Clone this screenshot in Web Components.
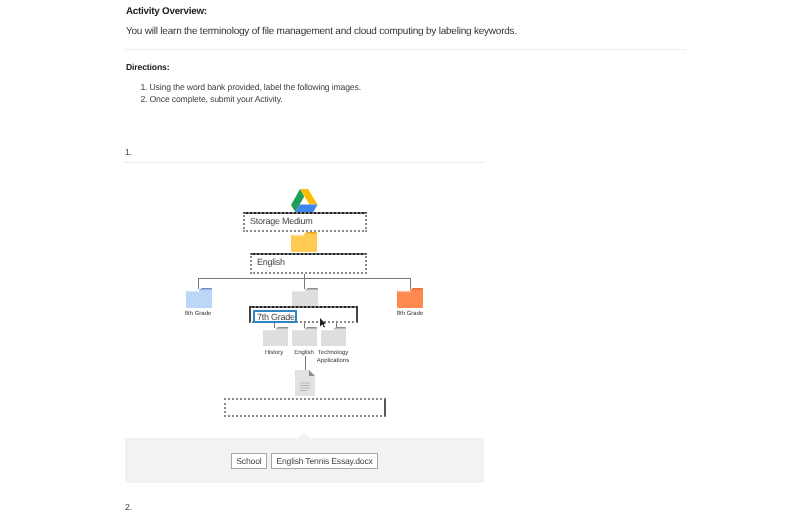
<!DOCTYPE html>
<html>
<head>
	<meta charset="utf-8">
	<title>Activity</title>
	<style>
		html, body { margin: 0; background: #fff; }
		body { height: 513px; overflow: hidden; font-family: "Liberation Sans", Arial, sans-serif; color: #333; text-rendering: geometricPrecision; }
	</style>
</head>
<body>
	<activity-page>
		<activity-overview heading="Activity Overview:">You will learn the terminology of file management and cloud computing by labeling keywords.</activity-overview>
		<activity-directions heading="Directions:">
			<li>Using the word bank provided, label the following images.</li>
			<li>Once complete, submit your Activity.</li>
		</activity-directions>
		<question-block number="1.">
			<label-diagram></label-diagram>
			<word-bank>
				<word-chip>School</word-chip>
				<word-chip>English Tennis Essay.docx</word-chip>
			</word-bank>
		</question-block>
		<question-block number="2."></question-block>
	</activity-page>

	<script>
	// small helper, every element is the same shape: a shadow root with styles + markup
	function component(name, html, setup) {
		customElements.define(name, class extends HTMLElement {
			connectedCallback() {
				if (this.shadowRoot) return;
				this.attachShadow({mode: 'open'});
				this.shadowRoot.innerHTML = html;
				if (setup) setup(this, this.shadowRoot);
			}
		});
	}

	component('activity-page', `
		<style>
			/* the reference is a slightly soft, scaled-down capture */
			:host { display: block; width: 561px; margin-left: 125px; filter: blur(.3px); }
		</style>
		<slot></slot>
	`);

	component('activity-overview', `
		<style>
			:host { display: block; padding: 5px 0 0 1px; height: 44px; border-bottom: 1px dotted #dcdcdc; }
			h2 { margin: 0; font-size: 9.800px; letter-spacing: -.23px; line-height: 13px; font-weight: bold; color: #222; }
			p { margin: 7px 0 0; font-size: 10px; letter-spacing: -.22px; line-height: 14px; color: #333; }
		</style>
		<h2></h2>
		<p><slot></slot></p>
	`, (el, root) => { root.querySelector('h2').textContent = el.getAttribute('heading'); });

	component('activity-directions', `
		<style>
			:host { display: block; padding: 11px 0 0 1px; height: 85px; }
			h3 { margin: 0; font-size: 8.700px; letter-spacing: -.18px; line-height: 12px; font-weight: bold; color: #222; }
			ol { margin: 9px 0 0; padding: 0 0 0 23.500px; font-size: 8.700px; letter-spacing: -.18px; line-height: 11.500px; color: #444; }
		</style>
		<h3></h3>
		<ol><slot></slot></ol>
	`, (el, root) => { root.querySelector('h3').textContent = el.getAttribute('heading'); });

	component('question-block', `
		<style>
			:host { display: block; width: 359px; }
			.num { font-size: 8.700px; line-height: 12px; color: #444; height: 16px; box-sizing: border-box; }
			hr { margin: 0; border: 0; border-top: 1px dotted #d8d8d8; }
			:host([number="2."]) { margin-top: 18px; }
			:host([number="2."]) hr { display: none; }
		</style>
		<div class="num"></div>
		<hr>
		<slot></slot>
	`, (el, root) => { root.querySelector('.num').textContent = el.getAttribute('number'); });

	component('drive-logo', `
		<style>:host { display: block; line-height: 0; }</style>
		<svg width="27" height="24" viewBox="0 0 27 24">
			<path d="M9 0h8l9.500 15.500h-8z" fill="#fbbc04"/>
			<path d="M9 0l4.200 7.500L4.400 23 0 16z" fill="#1e9e56"/>
			<path d="M4.400 23l4.300-7.500h17.800L22.300 23z" fill="#3f86f0"/>
		</svg>
	`);

	component('folder-icon', `
		<style>
			:host { display: block; line-height: 0; --body: #dedede; --back: #8e8e8e; }
			:host([tone="yellow"]) { --body: #ffcb52; --back: #f0a824; }
			:host([tone="blue"]) { --body: #bcd6f8; --back: #6f92c2; }
			:host([tone="orange"]) { --body: #ff8a50; --back: #e8703a; }
			svg { width: 100%; height: auto; }
		</style>
		<svg viewBox="0 0 26 20">
			<path d="M13 2l3-2h9.200a.8.8 0 0 1 .8.8V4H13z" fill="var(--back)"/>
			<path d="M.5 2.500h12.300l2-1H26v17.700a.8.8 0 0 1-.8.8H1a1 1 0 0 1-1-1V3z" fill="var(--body)"/>
			<path d="M.5 2.200h12l1.500 1.300H.5z" fill="#fff"/>
		</svg>
	`);

	component('doc-icon', `
		<style>:host { display: block; line-height: 0; }</style>
		<svg width="20" height="26" viewBox="0 0 20 26">
			<path d="M0 0h14l6 6v20H0z" fill="#e2e2e2"/>
			<path d="M14 0l6 6h-6z" fill="#8d8d8d"/>
			<path d="M5 13h10M5 15.500h10M5 18h10M5 20.500h7" stroke="#b5b5b5" stroke-width="1" fill="none"/>
		</svg>
	`);

	// opacity on the inner span keeps the text grey-antialiased under the page filter
	component('drop-zone', `
		<style>
			:host { display: flex; align-items: center; box-sizing: border-box; border: 2px dotted #8a8a8a; color: #444; font-size: 9px; letter-spacing: -.26px; padding: 0 0 3px 5px; background: #fff; }
			:host([heavy]) { border-top: 2px dotted #222; background: linear-gradient(#777, #777) top / 100% 2px no-repeat, #fff; background-origin: border-box; }
			:host([sides]) { border-left: 2px solid #444; border-right: 2px solid #444; padding: 0 0 0 2px; }
			span { opacity: .99; }
		</style>
		<span><slot></slot></span>
	`);

	component('picked-word', `
		<style>
			:host { display: flex; align-items: center; box-sizing: border-box; width: 44px; height: 13px; margin-top: 2px; padding-left: 2px; border: 2px solid #2f86c5; color: #444; white-space: nowrap; }
		</style>
		<slot></slot>
	`);

	component('tiny-label', `
		<style>
			:host { display: block; font-size: 6px; line-height: 7.500px; text-align: center; color: #333; white-space: nowrap; }
		</style>
		<slot></slot>
	`);

	component('label-diagram', `
		<style>
			:host { display: block; position: relative; height: 276px; }
			.n { position: absolute; }
			.line { position: absolute; background: #777; }
			.cursor { position: absolute; line-height: 0; }
		</style>
		<!-- canvas origin is page x 125, y 163 -->
		<div class="line" style="left:73px;top:115px;width:213px;height:1px"></div>
		<div class="line" style="left:179px;top:111px;width:1px;height:15px"></div>
		<div class="line" style="left:73px;top:115px;width:1px;height:11px"></div>
		<div class="line" style="left:285px;top:115px;width:1px;height:11px"></div>
		<div class="line" style="left:149px;top:160px;width:1px;height:5px"></div>
		<div class="line" style="left:179px;top:160px;width:1px;height:5px"></div>
		<div class="line" style="left:211px;top:160px;width:1px;height:5px"></div>
		<div class="line" style="left:180px;top:193px;width:1px;height:14px"></div>

		<drive-logo class="n" style="left:166px;top:26px"></drive-logo>
		<drop-zone class="n" heavy style="left:118px;top:49px;width:124px;height:20px">Storage Medium</drop-zone>
		<folder-icon class="n" tone="yellow" style="left:166px;top:69px;width:26px"></folder-icon>
		<drop-zone class="n" heavy style="left:125px;top:90px;width:117px;height:21px">English</drop-zone>

		<folder-icon class="n" tone="blue" style="left:61px;top:125px;width:26px"></folder-icon>
		<folder-icon class="n" style="left:167px;top:125px;width:26px"></folder-icon>
		<folder-icon class="n" tone="orange" style="left:272px;top:125px;width:26px"></folder-icon>
		<tiny-label class="n" style="left:43px;top:148px;width:60px">6th Grade</tiny-label>
		<tiny-label class="n" style="left:255px;top:148px;width:60px">8th Grade</tiny-label>

		<drop-zone class="n" heavy sides style="left:124px;top:143px;width:109px;height:17px;align-items:flex-start"><picked-word>7th Grade</picked-word></drop-zone>
		<svg class="cursor" style="left:195px;top:155px" width="7" height="10" viewBox="0 0 7 10"><path d="M0 0l6 6H3.500l1.500 3-1.200.6L2.300 6.500 0 8.500z" fill="#222"/></svg>

		<folder-icon class="n" style="left:138px;top:164px;width:25px"></folder-icon>
		<folder-icon class="n" style="left:167px;top:164px;width:25px"></folder-icon>
		<folder-icon class="n" style="left:196px;top:164px;width:25px"></folder-icon>
		<tiny-label class="n" style="left:119px;top:187px;width:60px">History</tiny-label>
		<tiny-label class="n" style="left:149px;top:187px;width:60px">English</tiny-label>
		<tiny-label class="n" style="left:178px;top:187px;width:60px">Technology<br>Applications</tiny-label>
		<doc-icon class="n" style="left:170px;top:207px"></doc-icon>
		<drop-zone class="n" style="left:99px;top:235px;width:162px;height:19px;border-right:2px solid #555"></drop-zone>
	`);

	component('word-bank', `
		<style>
			:host { display: flex; position: relative; justify-content: center; align-items: center; gap: 4px; height: 45px; background: #f2f2f2; margin-top: -1px; }
			.tip { position: absolute; left: 173px; top: -6px; width: 0; height: 0; border: 6px solid transparent; border-top: 0; border-bottom-color: #f2f2f2; }
		</style>
		<span class="tip"></span>
		<slot></slot>
	`);

	component('word-chip', `
		<style>
			:host { display: block; box-sizing: border-box; height: 16px; line-height: 14px; padding: 0 4.500px; font-size: 8.600px; letter-spacing: -.19px; color: #444; background: #fff; border: 1px solid #a5a5a5; }
			span { display: block; opacity: .99; }
		</style>
		<span><slot></slot></span>
	`);
	</script>
</body>
</html>
